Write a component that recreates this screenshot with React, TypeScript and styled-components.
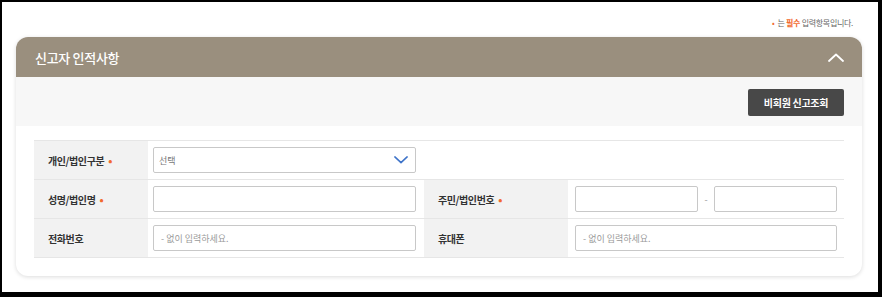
import React from 'react';
import styled, { createGlobalStyle } from 'styled-components';

const GlobalStyle = createGlobalStyle`
  html, body {
    margin: 0;
    padding: 0;
    background: #000;
  }
  body {
    font-family: 'Noto Sans CJK KR', 'Noto Sans', sans-serif;
  }
`;

const Screen = styled.div`
  width: 882px;
  height: 297px;
  box-sizing: border-box;
  padding: 2px 4px 5px 2px;
  background: #000;
`;

const Frame = styled.div`
  height: 100%;
  background: #fff;
  box-sizing: border-box;
  padding: 15px 16px 0 14px;
  display: flex;
  flex-direction: column;
`;

const Notice = styled.p`
  margin: 0 9px 8px 0;
  text-align: right;
  font-size: 8px;
  line-height: 12px;
  color: #666;
  letter-spacing: -0.3px;
`;

const Dot = styled.span`
  color: #f26a2e;
  margin-right: 3px;
`;

const Strong = styled.b`
  color: #f26a2e;
  font-weight: 700;
`;

const Card = styled.section`
  background: #fff;
  border-radius: 12px;
  box-shadow: 0 1px 4px rgba(0, 0, 0, 0.14);
  overflow: hidden;
`;

const CardHeader = styled.header`
  height: 40px;
  background: #9a8f7e;
  display: flex;
  align-items: center;
  justify-content: space-between;
  padding: 0 18px 0 19px;
`;

const Title = styled.h2`
  margin: 0;
  font-size: 13px;
  font-weight: 500;
  color: #fff;
  letter-spacing: -0.3px;
`;

const Toolbar = styled.div`
  height: 49px;
  background: #f7f7f7;
  display: flex;
  align-items: center;
  justify-content: flex-end;
  padding: 0 18px;
  box-sizing: border-box;
`;

const DarkButton = styled.button`
  height: 27px;
  width: 96px;
  border: none;
  border-radius: 2px;
  background: #484848;
  color: #fff;
  font-family: inherit;
  font-size: 10px;
  font-weight: 700;
  letter-spacing: -0.3px;
  margin-top: 1px;
`;

const Body = styled.div`
  padding: 14px 18px 18px 18px;
`;

const Table = styled.div`
  display: grid;
  grid-template-columns: 114px 276px 144px 276px;
  border-top: 1px solid #e6e6e6;
`;

const Label = styled.div`
  height: 38px;
  background: #f2f2f2;
  border-bottom: 1px solid #e6e6e6;
  display: flex;
  align-items: center;
  padding-left: 14px;
  font-size: 10px;
  font-weight: 700;
  color: #333;
  letter-spacing: -0.4px;
`;

const Cell = styled.div<{ $span?: number; $pad?: string }>`
  height: 38px;
  border-bottom: 1px solid #e6e6e6;
  display: flex;
  align-items: center;
  gap: 6px;
  padding: ${p => p.$pad || '0 8px 0 5px'};
  grid-column: span ${p => p.$span || 1};
  box-sizing: content-box;
`;

const Req = styled.span`
  color: #f26a2e;
  margin-left: 4px;
  font-size: 11px;
`;

const Input = styled.input`
  flex: 1;
  min-width: 0;
  height: 26px;
  box-sizing: border-box;
  border: 1px solid #c8c8c8;
  border-radius: 2px;
  padding: 0 7px;
  font-family: inherit;
  font-size: 9px;
  color: #333;
  background: #fff;
  outline: none;
  &::placeholder {
    color: #9a9a9a;
  }
`;

const Select = styled.div`
  width: 263px;
  height: 26px;
  box-sizing: border-box;
  border: 1px solid #c8c8c8;
  border-radius: 2px;
  display: flex;
  align-items: center;
  justify-content: space-between;
  padding: 0 7px 0 5px;
  font-size: 9px;
  color: #777;
`;

const Dash = styled.span`
  font-size: 9px;
  color: #999;
`;

const Chevron = ({ up, color, w, h }: { up?: boolean; color: string; w: number; h: number }) => (
  <svg width={w} height={h} viewBox="0 0 16 9" fill="none">
    <path
      d={up ? 'M1 8 L8 1.5 L15 8' : 'M1 1 L8 7.5 L15 1'}
      stroke={color}
      strokeWidth={1.8}
      strokeLinecap="round"
      strokeLinejoin="round"
    />
  </svg>
);

export default function App() {
  return (
    <Screen>
      <GlobalStyle />
      <Frame>
        <Notice>
          <Dot>•</Dot>는 <Strong>필수</Strong> 입력항목입니다.
        </Notice>
        <Card>
          <CardHeader>
            <Title>신고자 인적사항</Title>
            <Chevron up color="#fff" w={16} h={9} />
          </CardHeader>
          <Toolbar>
            <DarkButton>비회원 신고조회</DarkButton>
          </Toolbar>
          <Body>
            <Table>
              <Label>개인/법인구분<Req>•</Req></Label>
              <Cell $span={3}>
                <Select>
                  <span>선택</span>
                  <Chevron color="#3f74c9" w={14} h={8} />
                </Select>
              </Cell>

              <Label>성명/법인명<Req>•</Req></Label>
              <Cell>
                <Input />
              </Cell>
              <Label>주민/법인번호<Req>•</Req></Label>
              <Cell $pad="0 7px">
                <Input />
                <Dash>-</Dash>
                <Input />
              </Cell>

              <Label>전화번호</Label>
              <Cell>
                <Input placeholder="- 없이 입력하세요." />
              </Cell>
              <Label>휴대폰</Label>
              <Cell $pad="0 7px">
                <Input placeholder="- 없이 입력하세요." />
              </Cell>
            </Table>
          </Body>
        </Card>
      </Frame>
    </Screen>
  );
}
